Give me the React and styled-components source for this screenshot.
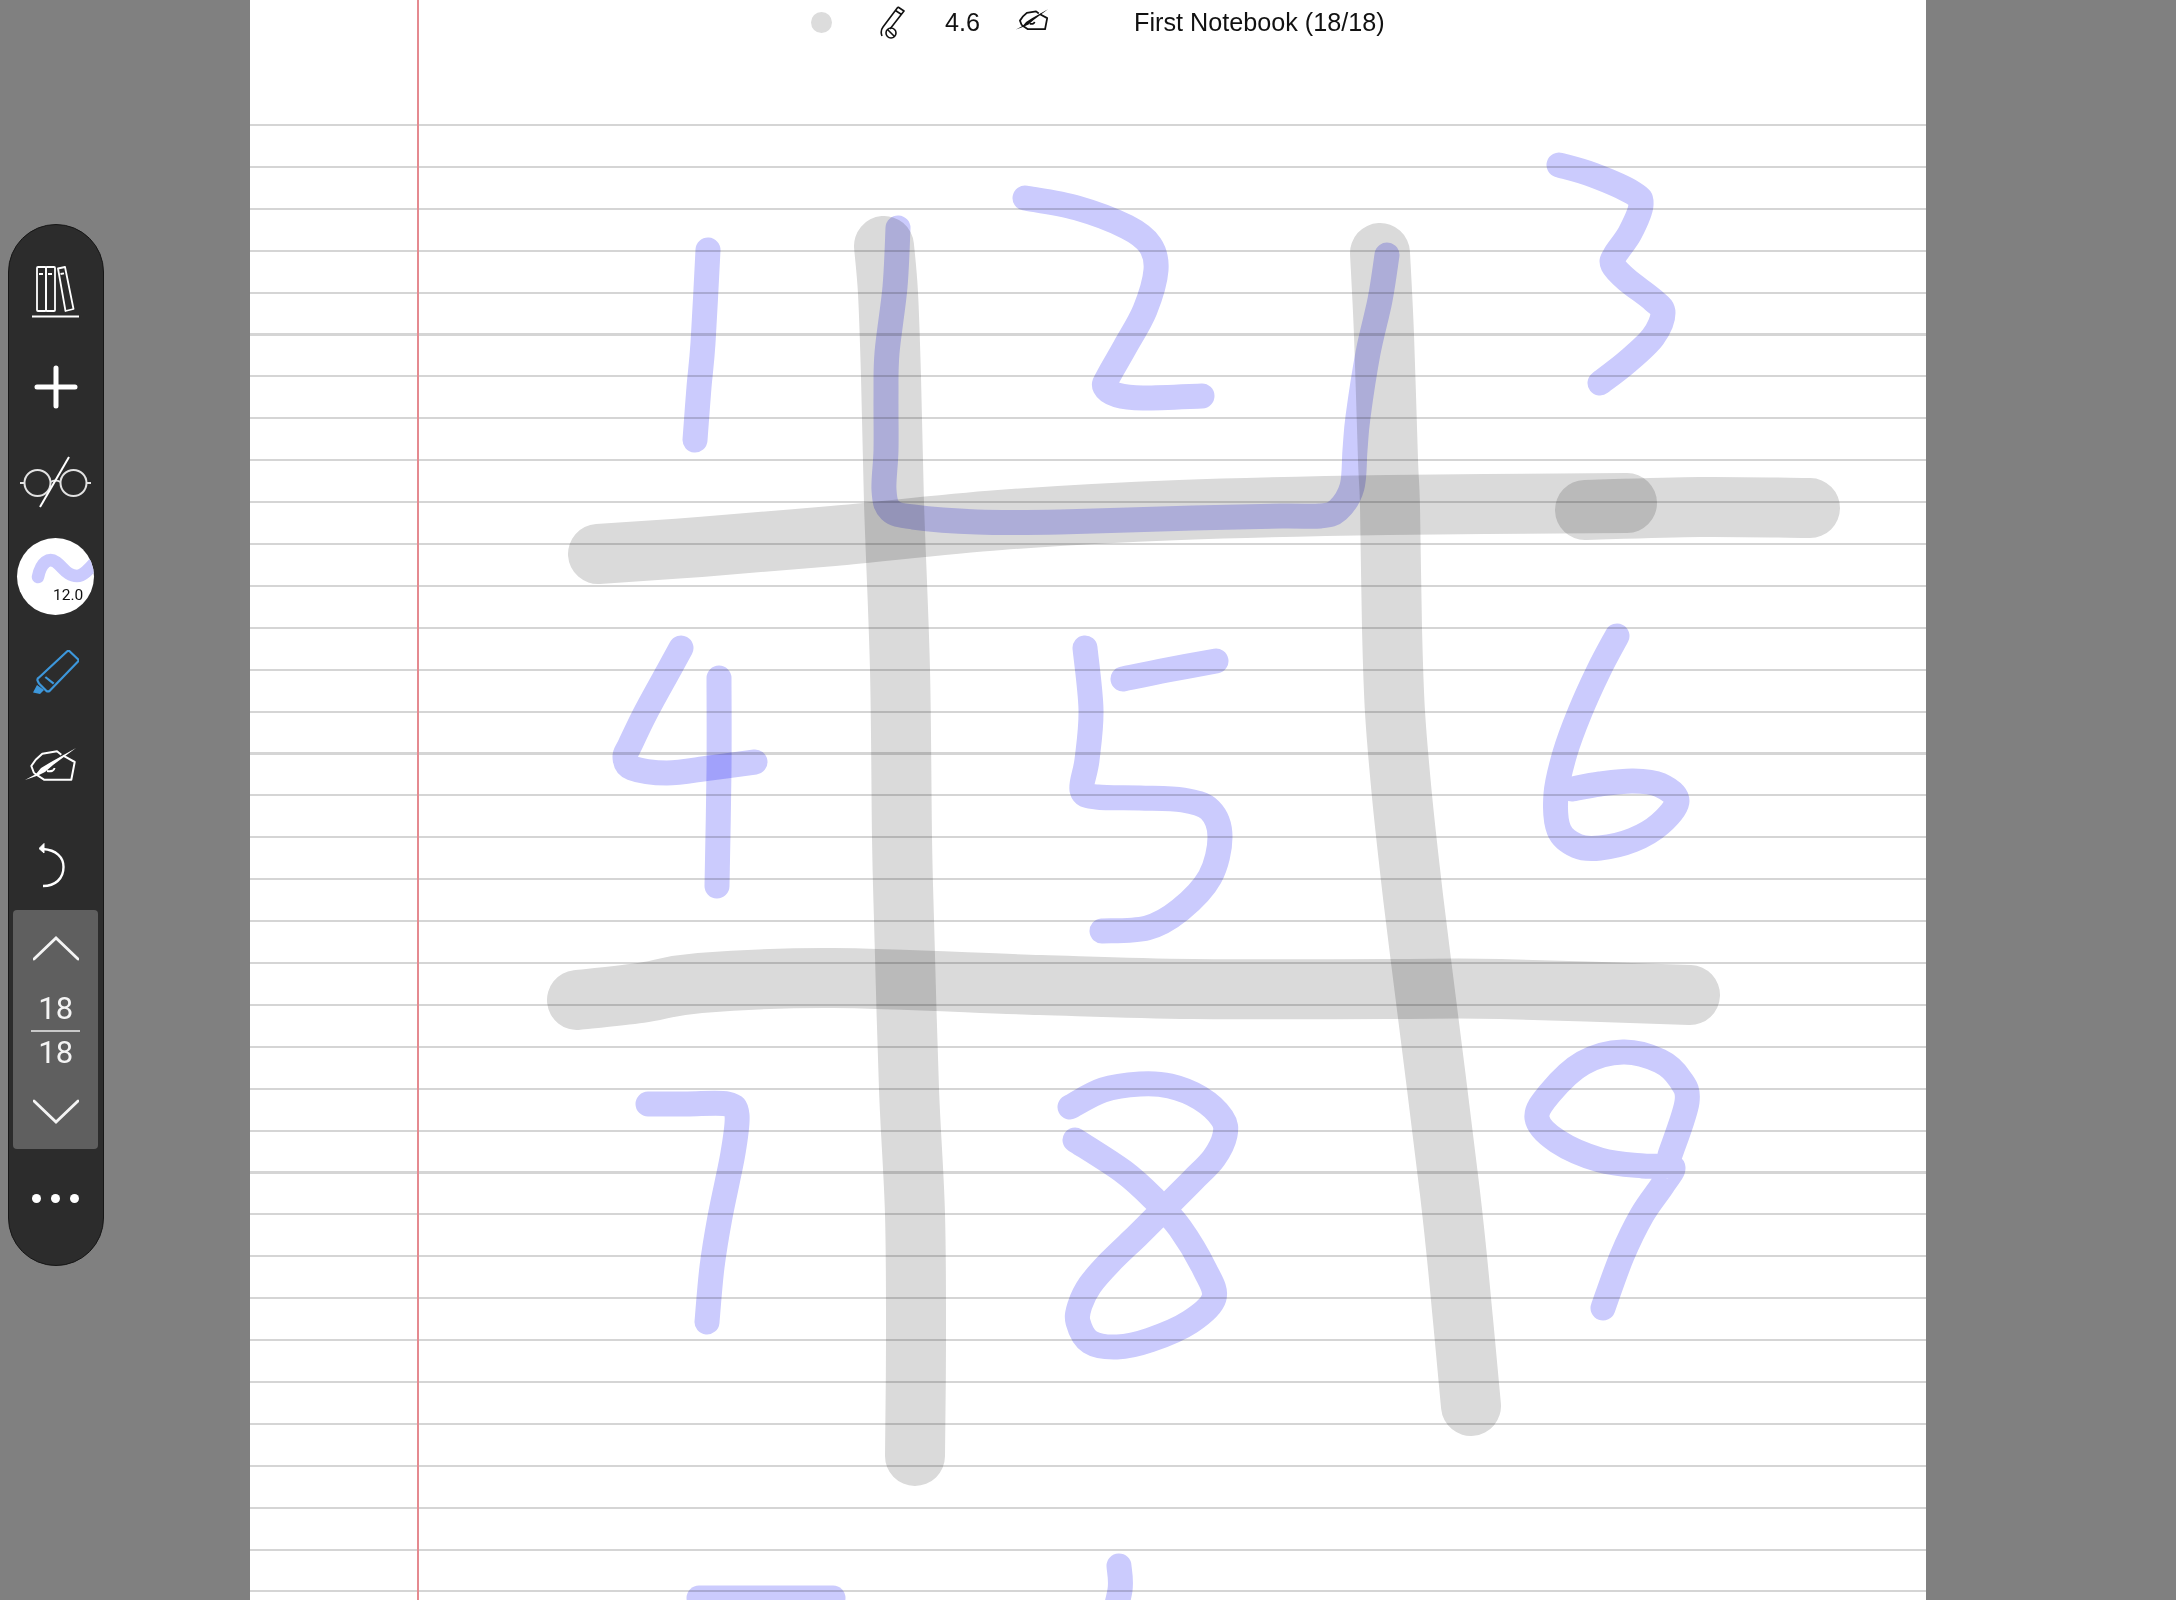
import React from 'react';
import styled, { createGlobalStyle } from 'styled-components';

const GlobalStyle = createGlobalStyle`
  html, body {
    margin: 0;
    padding: 0;
    background-color: #808080;
    font-family: 'Roboto', 'Liberation Sans', sans-serif;
  }
`;

const Screen = styled.div`
  position: relative;
  width: 2176px;
  height: 1600px;
  overflow: hidden;
  background-color: #808080;
`;

const Page = styled.main`
  position: relative;
  width: 1676px;
  height: 100%;
  margin-left: 250px;
  display: flex;
  flex-direction: column;
  background-color: #fff;

  &::after {
    content: '';
    position: absolute;
    top: 0;
    bottom: 0;
    left: 167px;
    width: 2px;
    background-color: #e58a90;
  }
`;

const TopBar = styled.header`
  height: 124.3px;
  padding: 0 0 80px 561px;
  box-sizing: border-box;
  display: flex;
  align-items: center;
  color: #111;
`;

const BarItem = styled.div`
  margin-left: ${(p) => p.$gap || 0}px;
  margin-bottom: ${(p) => p.$lift || 0}px;
  display: flex;
  align-items: center;
`;

const ColorDot = styled.span`
  width: 21px;
  height: 21px;
  border-radius: 50%;
  background-color: #dcdcdc;
`;

const BarText = styled.span`
  font-family: 'Liberation Sans', Arial, sans-serif;
  font-size: 25.2px;
  line-height: 32px;
  white-space: nowrap;
`;

const Rules = styled.div`
  flex: 1;
  background-image: repeating-linear-gradient(
    to bottom,
    #d5d5d5 0,
    #d5d5d5 2px,
    transparent 2px,
    transparent 41.9px
  );
`;

const InkLayer = styled.svg`
  position: absolute;
  left: 0;
  top: 0;
  pointer-events: none;
`;

const InkStroke = styled.path`
  fill: none;
  stroke: ${(p) => p.$color};
  stroke-width: ${(p) => p.$width};
  stroke-linecap: round;
  stroke-linejoin: round;
  mix-blend-mode: multiply;
`;

const Sidebar = styled.nav`
  position: absolute;
  left: 8px;
  top: 224px;
  width: 95.5px;
  height: 1042px;
  box-sizing: border-box;
  padding-top: 19px;
  display: flex;
  flex-direction: column;
  align-items: center;
  background-color: #2c2c2c;
  border: 1.5px solid #161616;
  border-radius: 48px;
  color: #fff;
`;

const ToolSlot = styled.div`
  width: 100%;
  height: ${(p) => p.$height || 95}px;
  flex-shrink: 0;
  box-sizing: border-box;
  padding: ${(p) => p.$pad || 0};
  display: flex;
  align-items: center;
  justify-content: center;
  color: ${(p) => p.$color || '#fff'};
`;

const BrushPreview = styled.div`
  position: relative;
  width: 77px;
  height: 77px;
  border-radius: 50%;
  overflow: hidden;
  background-color: #fff;
`;

const BrushSize = styled.span`
  position: absolute;
  right: 11px;
  bottom: 11px;
  font-size: 15.5px;
  line-height: 18px;
  color: #111;
`;

const Pager = styled.div`
  width: 85px;
  height: 239px;
  flex-shrink: 0;
  box-sizing: border-box;
  padding: 26px 0 25px;
  display: flex;
  flex-direction: column;
  align-items: center;
  background-color: #5f5f5f;
  border-radius: 4px;
`;

const PageNumber = styled.span`
  font-size: 31px;
  line-height: 36px;
  color: #f4f4f4;
`;

const PageDivider = styled.div`
  width: 49px;
  height: 2px;
  margin: 3px 0;
  background-color: #c8c8c8;
`;

const Numbers = styled.div`
  margin: auto 0;
  padding-top: 3px;
  display: flex;
  flex-direction: column;
  align-items: center;
`;

const Dots = styled.div`
  display: flex;
  gap: 10px;
`;

const Dot = styled.span`
  width: 9px;
  height: 9px;
  border-radius: 50%;
  background-color: #fff;
`;

const BooksIcon = () => (
  <svg width="47" height="52" viewBox="0 0 47 52" fill="none" stroke="#fff" strokeWidth="1.8" strokeLinejoin="round">
    <rect x="5" y="1" width="9" height="44" rx="1" />
    <rect x="14" y="1" width="9" height="44" rx="1" />
    <path d="M26 2.5L33 1L41.5 43L33.5 45Z" />
    <path d="M7 8h4M16 8h4M28.5 8l3.5-.7" />
    <path d="M0 50.5h47" strokeWidth="2" />
  </svg>
);

const PlusIcon = () => (
  <svg width="44" height="44" viewBox="0 0 44 44" fill="none" stroke="#fff" strokeWidth="5" strokeLinecap="round">
    <path d="M22 3v38M3 22h38" />
  </svg>
);

const GlassesIcon = () => (
  <svg width="71" height="52" viewBox="0 0 71 52" fill="none" stroke="#e2e2e2" strokeWidth="2">
    <circle cx="17.5" cy="27" r="13" />
    <circle cx="53.5" cy="27" r="13" />
    <path d="M0 27h4.5M66.5 27H71M30.5 26q5-3 10 0" />
    <path d="M49 1L20 51" stroke="#fff" />
  </svg>
);

const SquiggleIcon = () => (
  <svg width="77" height="77" viewBox="0 0 77 77" fill="none" stroke="#cacafd" strokeWidth="12.5" strokeLinecap="round">
    <path d="M21 39C24 24 32 19 39 24C47 30 50 38 60 38C67 38 73 30 80 22" />
  </svg>
);

const HighlighterIcon = () => (
  <svg width="46" height="44" viewBox="0 0 46 44" fill="none" stroke="currentColor" strokeWidth="2.2" strokeLinejoin="round">
    <path d="M36.3 1L45 9.3Q46 10.5 45 11.5L16.5 41Q15 42 13.5 41L11 38.5L6 33.5L4.5 30.5Q4 28.5 6 27.5L34 1.5Q35.2.5 36.3 1Z" />
    <path d="M12.3 27L20.7 33.7" />
    <path d="M4 35L11 40L7 44L0 42.5Z" fill="currentColor" stroke="none" />
  </svg>
);

const WritingHandIcon = ({ width = 51, height = 34, weight = 2 }) => (
  <svg width={width} height={height} viewBox="0 0 51 34" fill="none" stroke="currentColor" strokeWidth={weight} strokeLinejoin="round">
    <path d="M9 25L6.3 18L10.7 11.7L17.3 5.7L32 3.3L36.3 6.7M38.3 7.700L49.7 14L46.3 31.7L19 31.7L9 25" />
    <path d="M51 0L26 14L16 20L11 26L0 32L13 27.5L20 24L28 17Z" fill="currentColor" stroke="none" />
    <path d="M22 23Q29 24 29.5 20" />
  </svg>
);

const UndoIcon = () => (
  <svg width="26" height="46" viewBox="0 0 26 46" fill="none" stroke="#fff" strokeWidth="2.4">
    <path d="M4 6C17 7 24.5 14 24.5 24C24.5 36 16 43 4 43" />
    <path d="M0 5.5L5 .5V10Z" fill="#fff" strokeWidth="1" />
  </svg>
);

const ChevronIcon = ({ down }) => (
  <svg width="46" height="25" viewBox="0 0 46 25" fill="none" stroke="#f4f4f4" strokeWidth="2.8" strokeLinecap="round">
    <path d={down ? 'M1 2L23 23L45 2' : 'M1 23L23 2L45 23'} />
  </svg>
);

const PenIcon = () => (
  <svg width="25" height="33" viewBox="0 0 25 33" fill="none" stroke="currentColor" strokeWidth="1.6" strokeLinejoin="round">
    <path d="M18 1L24 5L10 23M18 1L3 21Q0 25 2 30M15.5 4.5L21.5 8.5" />
    <circle cx="11" cy="27" r="5" />
    <path d="M7.5 23.5L14.5 30.5" />
  </svg>
);

const smooth = (pts) => {
  let d = `M${pts[0][0]} ${pts[0][1]}`;
  for (let i = 0; i < pts.length - 1; i++) {
    const p0 = pts[i - 1] || pts[i];
    const p1 = pts[i];
    const p2 = pts[i + 1];
    const p3 = pts[i + 2] || p2;
    const c1x = p1[0] + (p2[0] - p0[0]) / 6;
    const c1y = p1[1] + (p2[1] - p0[1]) / 6;
    const c2x = p2[0] - (p3[0] - p1[0]) / 6;
    const c2y = p2[1] - (p3[1] - p1[1]) / 6;
    d += `C${c1x} ${c1y} ${c2x} ${c2y} ${p2[0]} ${p2[1]}`;
  }
  return d;
};

const grayStrokes = [
  [[884, 246], [888, 293], [891, 377], [894, 503], [900, 670], [902, 837], [904, 920], [909, 1089], [915, 1214], [916, 1340], [915, 1456]],
  [[1380, 253], [1384, 335], [1388, 460], [1390, 507], [1392, 628], [1395, 712], [1402, 796], [1411, 879], [1420, 953], [1450, 1193], [1463, 1320], [1471, 1406]],
  [[598, 554], [700, 547], [833, 536], [1000, 520], [1180, 510], [1388, 505], [1627, 503]],
  [[1585, 510], [1700, 507], [1810, 508]],
  [[577, 1000], [640, 993], [700, 983], [833, 978], [1040, 985], [1193, 989], [1388, 989], [1500, 989], [1690, 995]],
];

const blueStrokes = [
  [[708, 250], [703, 343], [699, 387], [695, 440]],
  [[898, 228], [895, 287], [887, 353], [886, 397], [886, 450], [884, 490], [890, 510], [913, 517], [977, 522], [1060, 522], [1193, 518], [1282, 516], [1320, 516], [1338, 510], [1352, 487], [1355, 450], [1358, 417], [1368, 353], [1380, 300], [1387, 255]],
  [[1025, 198], [1077, 208], [1127, 227], [1150, 245], [1156, 270], [1145, 310], [1125, 347], [1108, 377], [1105, 387], [1117, 395], [1143, 398], [1202, 396]],
  [[1559, 165], [1593, 175], [1633, 193], [1641, 205], [1630, 233], [1615, 255], [1613, 265], [1627, 280], [1653, 300], [1663, 313], [1653, 337], [1627, 362], [1600, 383]],
  [[681, 648], [669, 670], [646, 712], [630, 745], [625, 757], [632, 768], [667, 773], [710, 768], [755, 762]],
  [[719, 678], [719, 770], [717, 886]],
  [[1085, 648], [1091, 710], [1087, 760], [1082, 790], [1097, 797], [1140, 798], [1183, 800], [1210, 810], [1220, 837], [1210, 877], [1180, 910], [1147, 928], [1102, 931]],
  [[1123, 679], [1167, 670], [1216, 661]],
  [[1617, 636], [1599, 670], [1580, 712], [1565, 753], [1556, 794], [1559, 830], [1577, 846], [1600, 848], [1633, 840], [1660, 824], [1677, 801], [1660, 785], [1633, 781], [1600, 784], [1572, 789]],
  [[648, 1104], [687, 1104], [727, 1104], [737, 1115], [733, 1153], [720, 1217], [712, 1267], [707, 1322]],
  [[1070, 1107], [1103, 1090], [1140, 1084], [1170, 1086], [1200, 1098], [1222, 1118], [1225, 1135], [1214, 1158], [1193, 1180], [1163, 1210], [1138, 1235], [1110, 1262], [1090, 1285], [1080, 1305], [1078, 1322], [1090, 1342], [1117, 1347], [1150, 1340], [1190, 1322], [1214, 1298], [1205, 1270], [1180, 1228], [1155, 1200], [1124, 1172], [1075, 1140]],
  [[1670, 1155], [1687, 1102], [1680, 1079], [1660, 1061], [1623, 1052], [1583, 1063], [1550, 1093], [1537, 1118], [1557, 1141], [1600, 1160], [1643, 1166], [1660, 1166], [1673, 1168], [1662, 1186], [1642, 1215], [1622, 1256], [1603, 1308]],
  [[699, 1598], [833, 1598]],
  [[1119, 1566], [1120, 1590], [1110, 1630]],
];

const App = () => (
  <Screen>
    <GlobalStyle />
    <Page>
      <TopBar>
        <ColorDot />
        <BarItem $gap={48}>
          <PenIcon />
        </BarItem>
        <BarItem $gap={40}>
          <BarText>4.6</BarText>
        </BarItem>
        <BarItem $gap={36} $lift={4}>
          <WritingHandIcon width={32} height={24} weight={2.8} />
        </BarItem>
        <BarItem $gap={86}>
          <BarText>First Notebook (18/18)</BarText>
        </BarItem>
      </TopBar>
      <Rules />
    </Page>
    <InkLayer width="2176" height="1600" viewBox="0 0 2176 1600">
      {grayStrokes.map((pts) => (
        <InkStroke key={pts[0].join()} d={smooth(pts)} $color="#dadada" $width={60} />
      ))}
      {blueStrokes.map((pts) => (
        <InkStroke key={pts[0].join()} d={smooth(pts)} $color="#cbcbfd" $width={25} />
      ))}
    </InkLayer>
    <Sidebar>
      <ToolSlot><BooksIcon /></ToolSlot>
      <ToolSlot><PlusIcon /></ToolSlot>
      <ToolSlot><GlassesIcon /></ToolSlot>
      <ToolSlot>
        <BrushPreview>
          <SquiggleIcon />
          <BrushSize>12.0</BrushSize>
        </BrushPreview>
      </ToolSlot>
      <ToolSlot $color="#3d97db"><HighlighterIcon /></ToolSlot>
      <ToolSlot $pad="0 10px 4px 0"><WritingHandIcon /></ToolSlot>
      <ToolSlot $height={95.5} $pad="8px 8px 0 0"><UndoIcon /></ToolSlot>
      <Pager>
        <ChevronIcon />
        <Numbers>
          <PageNumber>18</PageNumber>
          <PageDivider />
          <PageNumber>18</PageNumber>
        </Numbers>
        <ChevronIcon down />
      </Pager>
      <ToolSlot $height={100}>
        <Dots>
          <Dot />
          <Dot />
          <Dot />
        </Dots>
      </ToolSlot>
    </Sidebar>
  </Screen>
);

export default App;
